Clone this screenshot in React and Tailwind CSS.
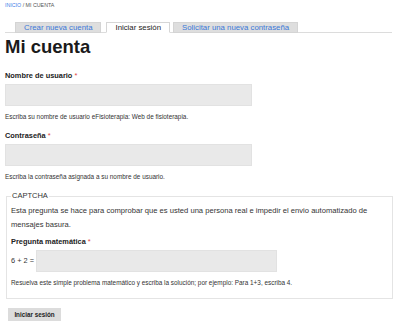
const tabs = [
  { label: 'Crear nueva cuenta', active: false },
  { label: 'Iniciar sesión', active: true },
  { label: 'Solicitar una nueva contraseña', active: false },
]

const Required = () => <span className="text-[#e0443e] font-normal"> *</span>

export default function App() {
  return (
    <div className="w-[400px] h-[327px] overflow-hidden bg-white px-[5px] font-['Liberation_Sans',Arial,sans-serif] text-[#222]">
      <div className="leading-[10px] text-[5.3px] text-[#555]">
        <a href="#" className="text-[#3f7ee8]">INICIO</a> / MI CUENTA
      </div>

      <ul className="mt-[12px] mr-[3px] flex border-b border-[#dcdcdc] pl-[10px]">
        {tabs.map((tab, i) => (
          <li
            key={tab.label}
            className={`-mb-px h-[11px] border px-[8px] text-[7.8px] leading-[9px] ${i === 1 ? 'ml-[5px]' : ''} ${i === 2 ? 'ml-[3px]' : ''} ${
              tab.active
                ? 'bg-white border-[#d6d6d6] border-b-white text-[#222]'
                : 'bg-[#dedede] border-[#d4d4d4] text-[#3b78d8]'
            }`}
          >
            {tab.label}
          </li>
        ))}
      </ul>

      <h1 className="mt-[4px] text-[18.5px] leading-[19px] font-bold text-[#1a1a1a]">Mi cuenta</h1>

      <form onSubmit={(e) => e.preventDefault()}>
        <label className="mt-[15px] block text-[7.4px] leading-[10px] font-bold">
          Nombre de usuario<Required />
        </label>
        <input type="text" className="mt-[3px] block h-[22px] w-[247px] border border-[#e2e2e2] bg-[#e9e9e9] outline-none" />
        <div className="mt-[6px] text-[6.4px] leading-[10px] text-[#333]">
          Escriba su nombre de usuario eFisioterapia: Web de fisioterapia.
        </div>

        <label className="mt-[9px] block text-[7.4px] leading-[10px] font-bold">
          Contraseña<Required />
        </label>
        <input type="password" className="mt-[3px] block h-[22px] w-[247px] border border-[#e2e2e2] bg-[#e9e9e9] outline-none" />
        <div className="mt-[6px] text-[6.4px] leading-[10px] text-[#333]">
          Escriba la contraseña asignada a su nombre de usuario.
        </div>

        <fieldset className="mt-[9px] ml-[1px] w-[387px] border border-[#e4e4e4] pl-[4px] pr-[4px] pb-[10px]">
          <legend className="px-[1px] text-[7.5px] leading-[10px] text-[#333]">CAPTCHA</legend>
          <p className="mt-[3px] text-[7.6px] leading-[13.5px] text-[#333]">
            Esta pregunta se hace para comprobar que es usted una persona real e impedir el envio automatizado de mensajes basura.
          </p>
          <label className="mt-[6px] block text-[7.4px] leading-[10px] font-bold">
            Pregunta matemática<Required />
          </label>
          <div className="mt-[3px] flex items-center">
            <span className="w-[25px] text-[7.4px] text-[#333]">6 + 2 =</span>
            <input type="text" className="h-[22px] w-[241px] border border-[#e2e2e2] bg-[#e9e9e9] outline-none" />
          </div>
          <div className="mt-[6px] text-[6.4px] leading-[10px] text-[#333]">
            Resuelva este simple problema matemático y escriba la solución; por ejemplo: Para 1+3, escriba 4.
          </div>
        </fieldset>

        <button type="submit" className="mt-[9px] ml-[3px] h-[13px] w-[53px] bg-[#dcdcdc] text-[6.3px] font-bold text-[#222]">
          Iniciar sesión
        </button>
      </form>
    </div>
  )
}
